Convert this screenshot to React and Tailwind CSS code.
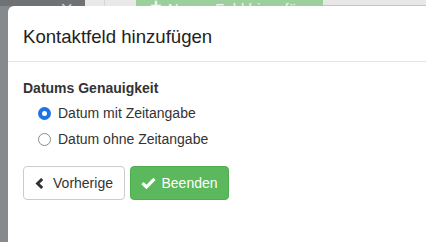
import React from "react";

function ChevronLeft() {
  return (
    <svg width="9" height="11" viewBox="0 0 9 11" className="shrink-0">
      <path d="M7.2 1 L2.6 5.5 L7.2 10" fill="none" stroke="#333" strokeWidth="3" strokeLinejoin="miter" />
    </svg>
  );
}

function Check() {
  return (
    <svg width="15" height="12" viewBox="0 0 15 12" className="shrink-0">
      <path d="M1.5 6.2 L5.4 10 L13.5 1.8" fill="none" stroke="#fff" strokeWidth="3.2" />
    </svg>
  );
}

function Radio({ checked }) {
  if (checked) {
    return (
      <span className="w-[13px] h-[13px] rounded-full bg-[#1a73e8] flex items-center justify-center shrink-0">
        <span className="w-[5px] h-[5px] rounded-full bg-white" />
      </span>
    );
  }
  return <span className="w-[13px] h-[13px] rounded-full border border-[#8a8a8a] bg-white shrink-0" />;
}

export default function App() {
  return (
    <div
      className="w-[426px] h-[242px] overflow-hidden flex flex-col bg-[#878a8d]"
      style={{ fontFamily: '"Liberation Sans", Arial, sans-serif' }}
    >
      <div className="h-[6px] shrink-0 overflow-hidden flex items-end">
        <div className="flex items-end h-[30px] w-full">
          <div className="w-[85px] h-full bg-[#6f7275] flex items-end justify-end pr-[12px]">
            <span className="text-[22px] leading-[22px] text-[#c9cbcd] translate-y-[14px]">×</span>
          </div>
          <div className="w-[20px] h-full bg-[#e9e9e9] border-r border-[#d6d6d6]" />
          <div className="w-[31px] h-full bg-[#e9e9e9]" />
          <div className="w-[187px] h-full bg-[#9dcf9d] flex items-end gap-[6px] pl-[14px] text-[#eef7ee]">
            <span className="text-[20px] leading-[20px] font-bold translate-y-[10px]">+</span>
            <span className="text-[15px] leading-[15px] translate-y-[10px]">Neues Feld hinzufügen</span>
          </div>
          <div className="flex-1 h-full bg-[#e7e7e7] border-b border-[#c4c4c4]" />
        </div>
      </div>
      <div className="flex flex-1 min-h-0">
        <div className="w-[8px] shrink-0 bg-[#878a8d]" />
        <div className="flex-1 bg-white rounded-tl-[6px] flex flex-col text-[#333]">
          <div className="h-[56px] border-b border-[#e5e5e5] px-[15px] pt-[18px]">
            <div className="text-[18.6px] leading-[26px] text-[#222]">Kontaktfeld hinzufügen</div>
          </div>
          <div className="px-[15px] pt-[16px] flex flex-col">
            <div className="text-[14px] leading-[20px] font-bold">Datums Genauigkeit</div>
            <div className="mt-[5px] flex items-center h-[20px] pl-[15px] gap-[7px]">
              <Radio checked />
              <span className="text-[14px] leading-[20px]">Datum mit Zeitangabe</span>
            </div>
            <div className="mt-[6px] flex items-center h-[20px] pl-[15px] gap-[7px]">
              <Radio />
              <span className="text-[14px] leading-[20px]">Datum ohne Zeitangabe</span>
            </div>
            <div className="mt-[17px] flex gap-[5px]">
              <button className="h-[34px] w-[102px] rounded-[4px] border border-[#cccccc] bg-white flex items-center justify-center gap-[9px] text-[14px] text-[#333]">
                <ChevronLeft />
                <span>Vorherige</span>
              </button>
              <button className="h-[34px] w-[99px] rounded-[4px] border border-[#4cae4c] bg-[#5cb85c] flex items-center justify-center gap-[5px] text-[14px] text-white">
                <Check />
                <span>Beenden</span>
              </button>
            </div>
          </div>
        </div>
      </div>
    </div>
  );
}
